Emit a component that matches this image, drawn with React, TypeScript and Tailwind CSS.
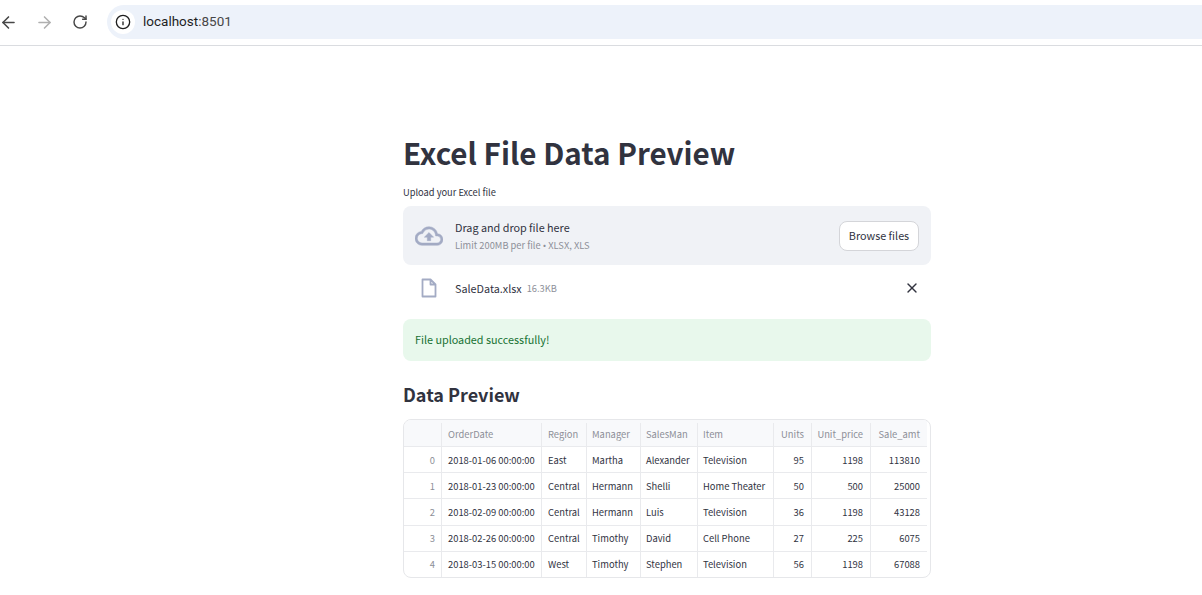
import React from "react";
import { ArrowLeft, ArrowRight, RotateCw, Info, X } from "lucide-react";

const FONT = "font-['Noto_Sans_CJK_SC','Noto_Sans',sans-serif]";

const COLUMNS = [
  { label: "OrderDate", w: "w-[100px] pl-[6px]" },
  { label: "Region", w: "w-[45px] pl-[6px]" },
  { label: "Manager", w: "w-[54px] pl-[5px]" },
  { label: "SalesMan", w: "w-[57px] pl-[5px]" },
  { label: "Item", w: "w-[76px] pl-[5px]" },
  { label: "Units", w: "w-[38px] justify-end pr-[7px]" },
  { label: "Unit_price", w: "w-[59px] justify-end pr-[7px]" },
  { label: "Sale_amt", w: "w-[56px] justify-end pr-[7px]" },
];

const ROWS = [
  ["2018-01-06 00:00:00", "East", "Martha", "Alexander", "Television", "95", "1198", "113810"],
  ["2018-01-23 00:00:00", "Central", "Hermann", "Shelli", "Home Theater", "50", "500", "25000"],
  ["2018-02-09 00:00:00", "Central", "Hermann", "Luis", "Television", "36", "1198", "43128"],
  ["2018-02-26 00:00:00", "Central", "Timothy", "David", "Cell Phone", "27", "225", "6075"],
  ["2018-03-15 00:00:00", "West", "Timothy", "Stephen", "Television", "56", "1198", "67088"],
];

const BrowserBar = () => (
  <header className="flex h-[46px] items-start border-b border-[#dadce0] bg-white pt-[5px]">
    <div className="flex h-[34px] w-[107px] shrink-0 items-center">
      <ArrowLeft size={19} strokeWidth={2} className="-ml-[1px] text-[#474747]" />
      <ArrowRight size={19} strokeWidth={2} className="ml-[17px] text-[#b0b0b0]" />
      <RotateCw size={16} strokeWidth={2.2} className="ml-[18px] text-[#474747]" />
    </div>
    <div className="flex h-[34px] flex-1 items-center rounded-l-full bg-[#edf2fa] pl-[4px]">
      <div className="flex h-6 w-6 items-center justify-center rounded-full bg-white">
        <Info size={16} strokeWidth={2} className="text-[#1f1f1f]" />
      </div>
      <span className="ml-2 font-['Roboto',sans-serif] text-[13.5px] leading-none text-[#1f1f1f]">
        localhost<span className="text-[#474747]">:8501</span>
      </span>
    </div>
  </header>
);

const Uploader = () => (
  <div className="mt-[7px] flex h-[59px] items-center rounded-lg bg-[#f0f2f6] px-3">
    <svg width="28" height="28" viewBox="0 0 24 24" fill="#a3abc4" stroke="#a3abc4" strokeWidth="0.4" className="shrink-0">
      <path d="M19.35 10.04A7.49 7.49 0 0 0 12 4C9.11 4 6.6 5.64 5.35 8.04A5.994 5.994 0 0 0 0 14c0 3.31 2.69 6 6 6h13c2.76 0 5-2.24 5-5 0-2.64-2.05-4.78-4.65-4.96zM19 18H6c-2.21 0-4-1.79-4-4 0-2.05 1.53-3.76 3.56-3.97l1.07-.11.5-.95A5.469 5.469 0 0 1 12 6c2.62 0 4.88 1.86 5.39 4.43l.3 1.5 1.53.11A2.98 2.98 0 0 1 22 15c0 1.65-1.35 3-3 3zM8 13h2.55v3h2.9v-3H16l-4-4z" />
    </svg>
    <div className="ml-3 flex flex-col">
      <span className="text-[10.8px] leading-[16px] text-[#31333f]">Drag and drop file here</span>
      <span className="mt-[3px] text-[9.3px] leading-[14px] text-[#8d8f98]">
        Limit 200MB per file <span className="font-['Noto_Sans',sans-serif]">•</span> XLSX, XLS
      </span>
    </div>
    <button className="ml-auto h-[30px] w-[80px] rounded-lg border border-[#d4d5d9] bg-white text-[10.8px] leading-none text-[#31333f]">
      Browse files
    </button>
  </div>
);

const UploadedFile = () => (
  <div className="flex h-[46px] items-center pl-[17px] pr-[11.5px]">
    <svg width="18" height="20" viewBox="0 0 18 20" fill="none" stroke="#a3abc4" strokeWidth="1.8" className="shrink-0">
      <path d="M3 1.5h7.5L15.5 6.5V18.5H2.5V1.5z M10.5 1.5V6.5H15.5" strokeLinejoin="round" />
    </svg>
    <span className="ml-[17px] text-[10.8px] leading-none text-[#31333f]">SaleData.xlsx</span>
    <span className="ml-[5px] pt-[1px] text-[9.3px] leading-none text-[#8d8f98]">16.3KB</span>
    <X size={16} strokeWidth={2} className="ml-auto text-[#31333f]" />
  </div>
);

const DataTable = () => (
  <div className="mt-[11px] h-[159px] overflow-hidden rounded-lg border border-[#e6e7ea] text-[9.4px] leading-none">
    <div className="flex h-[26px] w-[523px] bg-[#f8f9fb] pt-[3px] text-[#8d8f98]">
      <div className="w-[38px] shrink-0 border-r border-[#e9eaed]" />
      {COLUMNS.map((col) => (
        <div
          key={col.label}
          className={`${col.w} flex shrink-0 items-center border-r border-[#e9eaed] last:border-r-0`}
        >
          {col.label}
        </div>
      ))}
    </div>
    {ROWS.map((row, i) => (
      <div key={row[0]} className="flex h-[26.2px] w-[523px] border-t border-[#e9eaed] text-[#31333f]">
        <div className="flex w-[38px] shrink-0 items-center justify-end border-r border-[#e9eaed] px-[6px] pt-[1.5px] text-[#8d8f98]">
          {i}
        </div>
        {COLUMNS.map((col, c) => (
          <div
            key={col.label}
            className={`${col.w} flex shrink-0 items-center whitespace-nowrap border-r border-[#e9eaed] pt-[1.5px] last:border-r-0`}
          >
            {row[c]}
          </div>
        ))}
      </div>
    ))}
  </div>
);

export default function App() {
  return (
    <div className={`${FONT} h-[595px] overflow-hidden bg-white`}>
      <BrowserBar />
      <main className="ml-[403px] w-[528px]">
        <h1 className="mt-[87px] text-[29.6px] font-bold leading-[40px] text-[#31333f]">Excel File Data Preview</h1>
        <p className="mt-[12px] text-[9.3px] leading-[14px] text-[#31333f]">Upload your Excel file</p>
        <Uploader />
        <UploadedFile />
        <div className="mt-2 flex h-[42px] items-center rounded-lg bg-[#e8f8ec] px-3 pb-[1px] text-[10.8px] leading-none text-[#177233]">
          File uploaded successfully!
        </div>
        <h2 className="mt-[19px] text-[18px] font-semibold leading-[28px] text-[#31333f]">Data Preview</h2>
        <DataTable />
      </main>
    </div>
  );
}
